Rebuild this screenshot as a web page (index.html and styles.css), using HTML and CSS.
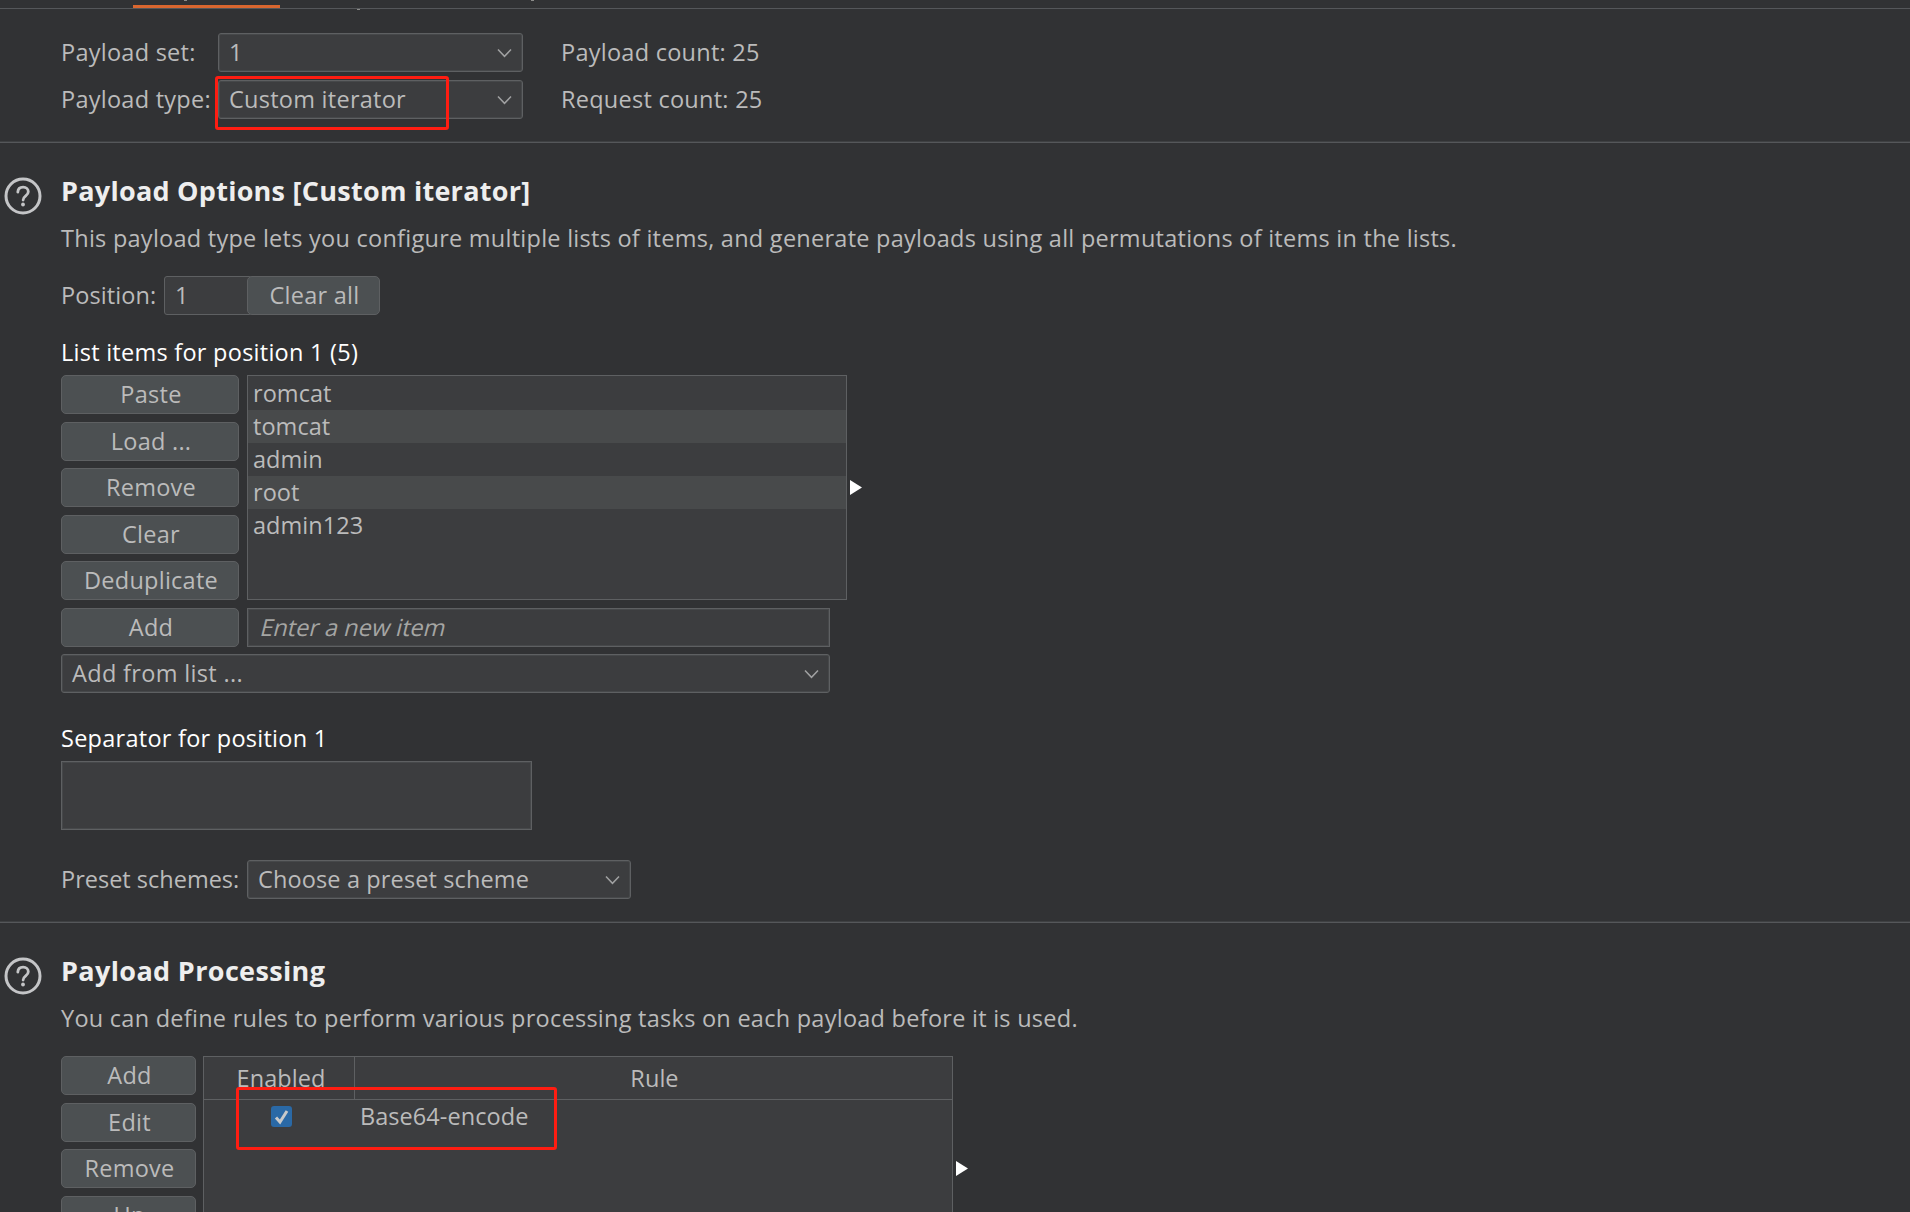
FILE: index.html
```html
<!DOCTYPE html>
<html lang="en">
<head>
<meta charset="utf-8">
<title>Payloads</title>
<link rel="stylesheet" href="styles.css">
</head>
<body>
<div class="tabs"><div class="tab-active"></div><i class="tail tail-a"></i><i class="tail tail-b"></i><i class="tail tail-c"></i></div>

<section class="sets">
  <div class="set-row">
    <span class="label">Payload set:</span>
    <div class="select"><span>1</span><svg class="chev" viewBox="0 0 15 10"><path d="M1 1.5l6.5 6.8L14 1.5"/></svg></div>
    <span class="count">Payload count: 25</span>
  </div>
  <div class="set-row">
    <span class="label">Payload type:</span>
    <div class="select"><span>Custom iterator</span><svg class="chev" viewBox="0 0 15 10"><path d="M1 1.5l6.5 6.8L14 1.5"/></svg></div>
    <span class="count">Request count: 25</span>
  </div>
  <div class="mark mark-type"></div>
</section>

<section class="panel options">
  <svg class="help" viewBox="0 0 38 38"><circle cx="19" cy="19" r="17"/><path d="M13.8 15.2c.2-3.2 2.4-5 5.3-5 3.2 0 5.2 2 5.2 4.5 0 4.2-5.2 4-5.2 8.3"/><circle class="dot" cx="19" cy="27.5" r="1.9"/></svg>
  <div class="body">
    <h2>Payload Options [Custom iterator]</h2>
    <p class="desc">This payload type lets you configure multiple lists of items, and generate payloads using all permutations of items in the lists.</p>
    <div class="position">
      <span class="label">Position:</span>
      <div class="spin">1</div>
      <div class="btn">Clear all</div>
    </div>
    <h3>List items for position 1 (5)</h3>
    <div class="items">
      <div class="stack">
        <div class="btn">Paste</div>
        <div class="btn">Load ...</div>
        <div class="btn">Remove</div>
        <div class="btn">Clear</div>
        <div class="btn">Deduplicate</div>
      </div>
      <ul class="list">
        <li>romcat</li>
        <li>tomcat</li>
        <li>admin</li>
        <li>root</li>
        <li>admin123</li>
      </ul>
      <svg class="arrow" viewBox="0 0 12 15"><path d="M0 0l12 7.5L0 15z"/></svg>
    </div>
    <div class="add-row">
      <div class="btn">Add</div>
      <div class="field"><span class="hint">Enter a new item</span></div>
    </div>
    <div class="select from-list"><span>Add from list ...</span><svg class="chev" viewBox="0 0 15 10"><path d="M1 1.5l6.5 6.8L14 1.5"/></svg></div>
    <h3 class="sep-title">Separator for position 1</h3>
    <div class="separator"></div>
    <div class="preset">
      <span class="label">Preset schemes:</span>
      <div class="select"><span>Choose a preset scheme</span><svg class="chev" viewBox="0 0 15 10"><path d="M1 1.5l6.5 6.8L14 1.5"/></svg></div>
    </div>
  </div>
</section>

<section class="panel processing">
  <svg class="help" viewBox="0 0 38 38"><circle cx="19" cy="19" r="17"/><path d="M13.8 15.2c.2-3.2 2.4-5 5.3-5 3.2 0 5.2 2 5.2 4.5 0 4.2-5.2 4-5.2 8.3"/><circle class="dot" cx="19" cy="27.5" r="1.9"/></svg>
  <div class="body">
    <h2>Payload Processing</h2>
    <p class="desc">You can define rules to perform various processing tasks on each payload before it is used.</p>
    <div class="rules">
      <div class="stack">
        <div class="btn">Add</div>
        <div class="btn">Edit</div>
        <div class="btn">Remove</div>
        <div class="btn">Up</div>
      </div>
      <div class="table">
        <div class="thead"><div>Enabled</div><div>Rule</div></div>
        <div class="trow"><div><svg class="check" viewBox="0 0 21 21"><rect width="21" height="21" rx="3"/><path d="M5 11.5l4 4.5 7-11"/></svg></div><div>Base64-encode</div></div>
        <div class="mark mark-rule"></div>
      </div>
      <svg class="arrow" viewBox="0 0 12 15"><path d="M0 0l12 7.5L0 15z"/></svg>
    </div>
  </div>
</section>
</body>
</html>
```
FILE: styles.css
```css
* { box-sizing: border-box; }
html, body { height: 1212px; overflow: hidden; }
body {
  margin: 0;
  background: #313234;
  color: #bbbbbb;
  font: 23.5px/37px "Open Sans", "Noto Sans", sans-serif;
  letter-spacing: 0.26px;
  white-space: nowrap;
}
h2, h3, p, ul { margin: 0; padding: 0; font-weight: 400; font-size: 23.5px; }

.tabs { position: relative; height: 9px; border-bottom: 1px solid #55575a; }
.tab-active { width: 147px; height: 3px; margin: 0 0 0 133px; background: #d9662f; position: relative; top: 5px; }
.tail { position: absolute; width: 3px; height: 1px; background: #8c8c8a; }
.tail-a { left: 184px; top: 0; }
.tail-b { left: 357px; top: 9px; }
.tail-c { left: 531px; top: 0; }

.sets {
  position: relative;
  height: 134px;
  padding: 24px 0 0 61px;
  display: flex; flex-direction: column; gap: 8px;
}
.sets, .options { border-bottom: 1px solid #55575a; box-shadow: inset 0 -1px #3e4042; }
.set-row { display: flex; height: 39px; }
.set-row .label { width: 157px; }
.set-row .select { width: 305px; }
.set-row .count { margin-left: 38px; }
.label, .count { padding-top: 1px; }

.select, .spin, .field, .btn, .list, .separator, .table { border: 1px solid #5e6062; background: #3c3d3f; }
.select, .field, .separator { box-shadow: inset 0 0 0 1px #46484a; }
.select {
  height: 39px; border-radius: 3px;
  padding: 0 10px;
  display: flex; justify-content: space-between; align-items: center;
}
.chev { width: 15px; height: 10px; fill: none; stroke: #a0a1a2; stroke-width: 1.5; }
.btn { height: 39px; border-radius: 5px; background: #4c5052; text-align: center; padding-left: 2px; }

.mark { position: absolute; border: 3px solid #ff1d12; border-radius: 3px; }
.mark-type { left: 215px; top: 67px; width: 234px; height: 54px; }
.mark-rule { left: 32px; top: 30px; width: 321px; height: 63px; }

.panel { display: flex; padding-left: 4px; }
.options { height: 780px; }
.help { width: 38px; height: 38px; margin: 34px 19px 0 0; fill: none; stroke: #c4c5c7; stroke-width: 3; flex: none; }
.help path { stroke-width: 2.8; stroke-linecap: round; }
.help .dot { fill: #c4c5c7; stroke: none; }
.body { padding-top: 28px; }
h2 { height: 48px; font-size: 27px; line-height: 40px; font-weight: 700; color: #eeeeee; }
h3 { color: #fff; line-height: 39px; }
.desc { height: 57px; line-height: 39px; }

.position { display: flex; }
.position .label { width: 103px; letter-spacing: 0.1px; }
.spin { width: 88px; height: 39px; padding-left: 10px; border-radius: 3px; }
.position .btn { width: 133px; margin-left: -5px; }
.position + h3 { margin-top: 18px; height: 42px; }

.items, .rules { display: flex; gap: 8px; }
.stack { display: flex; flex-direction: column; gap: 7.5px; width: 178px; }
.list { width: 600px; height: 225px; padding-top: 1px; list-style: none; letter-spacing: 0.05px; }
.list li { height: 33px; padding-left: 5px; line-height: 33px; }
.list li:nth-child(even) { background: #484a4b; }
.arrow { width: 12px; height: 15px; fill: #fff; margin: 105px 0 0 -5px; }
.add-row { display: flex; gap: 8px; margin-top: 8px; }
.add-row .btn { width: 178px; }
.field { width: 583px; height: 39px; padding-left: 13px; color: #a5a5a3; }
.hint { display: inline-block; transform: skewX(-14deg); letter-spacing: 0; }
.from-list { width: 769px; margin-top: 7px; }
.from-list span { letter-spacing: 0.34px; }
.sep-title { margin-top: 26px; height: 42px; }
.separator { width: 471px; height: 69px; }
.preset { display: flex; margin-top: 30px; letter-spacing: 0.13px; }
.preset .label { width: 186px; letter-spacing: 0; }
.preset .select { width: 384px; }

.processing h2 { letter-spacing: 0.36px; }
.rules .stack { width: 135px; }
.rules { gap: 7px; }
.table { position: relative; width: 750px; height: 200px; letter-spacing: 0.06px; }
.thead, .trow { display: grid; grid-template-columns: 151px 1fr; }
.thead { height: 43px; border-bottom: 1px solid #5e6062; text-align: center; }
.thead div { padding: 3px 0 0 2px; }
.thead div:first-child { border-right: 1px solid #5e6062; padding-left: 4px; }
.trow > div:first-child { display: flex; justify-content: center; padding: 6px 0 0 3px; }
.trow > div:last-child { padding-left: 5px; line-height: 33px; }
.check { width: 21px; height: 21px; fill: #2a69a6; }
.check path { fill: none; stroke: #c8c9ca; stroke-width: 3; }
.rules .arrow { margin-left: -4px; }
```
